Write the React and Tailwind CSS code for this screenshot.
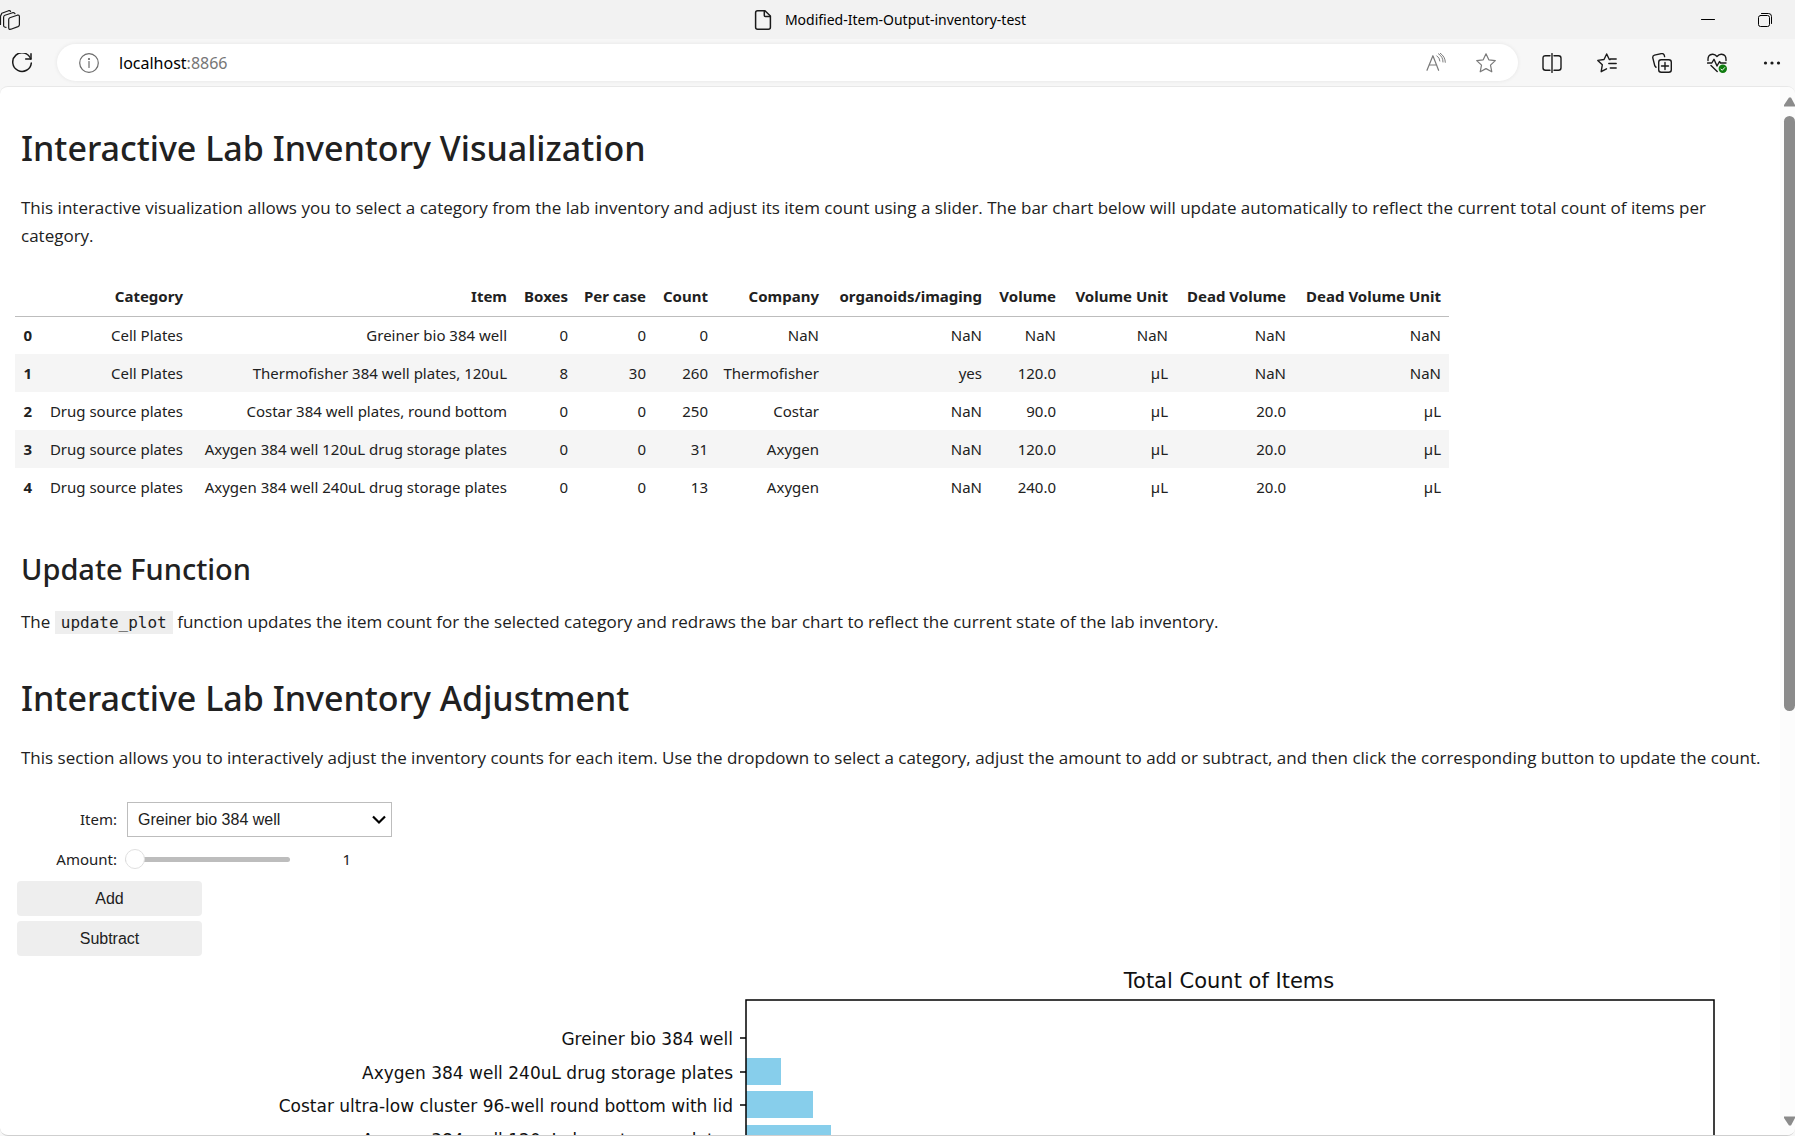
import React, { useState } from "react";

const columns = [
  { label: "Category", width: "w-[151px]" },
  { label: "Item", width: "w-[324px]" },
  { label: "Boxes", width: "w-[61px]" },
  { label: "Per case", width: "w-[78px]" },
  { label: "Count", width: "w-[62px]" },
  { label: "Company", width: "w-[111px]" },
  { label: "organoids/imaging", width: "w-[163px]" },
  { label: "Volume", width: "w-[74px]" },
  { label: "Volume Unit", width: "w-[112px]" },
  { label: "Dead Volume", width: "w-[118px]" },
  { label: "Dead Volume Unit", width: "w-[155px]" },
];

const rows = [
  ["Cell Plates", "Greiner bio 384 well", "0", "0", "0", "NaN", "NaN", "NaN", "NaN", "NaN", "NaN"],
  ["Cell Plates", "Thermofisher 384 well plates, 120uL", "8", "30", "260", "Thermofisher", "yes", "120.0", "µL", "NaN", "NaN"],
  ["Drug source plates", "Costar 384 well plates, round bottom", "0", "0", "250", "Costar", "NaN", "90.0", "µL", "20.0", "µL"],
  ["Drug source plates", "Axygen 384 well 120uL drug storage plates", "0", "0", "31", "Axygen", "NaN", "120.0", "µL", "20.0", "µL"],
  ["Drug source plates", "Axygen 384 well 240uL drug storage plates", "0", "0", "13", "Axygen", "NaN", "240.0", "µL", "20.0", "µL"],
];

const bars = [
  { label: "Greiner bio 384 well", size: 0 },
  { label: "Axygen 384 well 240uL drug storage plates", size: 35 },
  { label: "Costar ultra-low cluster 96-well round bottom with lid", size: 67 },
  { label: "Axygen 384 well 120uL drug storage plates", size: 85 },
];

function Icon({ size = 20, className = "", children }) {
  return (
    <svg
      width={size}
      height={size}
      viewBox={`0 0 ${size} ${size}`}
      fill="none"
      stroke="currentColor"
      strokeWidth="1.2"
      strokeLinecap="round"
      strokeLinejoin="round"
      className={`shrink-0 ${className}`}
      aria-hidden="true"
    >
      {children}
    </svg>
  );
}

function IconButton({ label, className = "", children }) {
  return (
    <button type="button" aria-label={label} className={`flex h-8 items-center justify-center ${className}`}>
      {children}
    </button>
  );
}

function TitleBar() {
  return (
    <header className="grid h-[39px] shrink-0 grid-cols-[1fr_auto_1fr] items-center bg-[#f2f2f2] text-[#1a1a1a]">
      <IconButton label="Tab actions" className="w-5">
        <Icon>
          <path d="M0.5 14.5V6.2L1.8 3.2 8.6 0.7q1.4-.4 2 .8" />
          <path d="M6 17.3 4.6 17q-1-.4-1-1.500V7.200q0-1.500 1.300-2L12.600 2.700q1.800-.5 2.400 1" />
          <path d="M9.800 7.700 17.200 5.200q2.200-.5 2.200 1.300v8.200q0 1.300-1.400 1.900l-7.100 2.600q-2.200.6-2.200-1.400V9.400q0-1.200 1.100-1.700z" />
        </Icon>
      </IconButton>
      <div className="flex items-center gap-3 pr-4">
        <Icon>
          <path d="M4.600 .8h7.400L17.400 6v11.200q0 2-2 2H4.600q-2 0-2-2V2.800q0-2 2-2z" strokeWidth="1.500" />
          <path d="M11.300 1v4.500q0 1 1 1h4.700" strokeWidth="1.500" />
        </Icon>
        <span className="text-sm text-black">Modified-Item-Output-inventory-test</span>
      </div>
      <div className="flex items-center justify-end gap-[17px] pr-[10px] text-black">
        <IconButton label="Minimize" className="w-10">
          <Icon size={14}>
            <path d="M.5 6.500h13" strokeWidth="1" />
          </Icon>
        </IconButton>
        <IconButton label="Restore" className="w-10">
          <Icon size={14}>
            <rect x=".5" y="2.500" width="11" height="11" rx="2" strokeWidth="1" />
            <path d="M3.500.5h7q3 0 3 3v7" strokeWidth="1" />
          </Icon>
        </IconButton>
      </div>
    </header>
  );
}

function Toolbar() {
  return (
    <nav className="flex h-[47px] shrink-0 items-center bg-[#f7f7f7] pl-[6px] pr-[3px] text-[#1a1a1a]">
      <IconButton label="Refresh" className="w-8">
        <Icon>
          <path d="M18.800 6A9.300 9.300 0 1 0 19.300 10" strokeWidth="1.500" />
          <path d="M19 .8v5.300h-5.300" strokeWidth="1.500" />
        </Icon>
      </IconButton>
      <div className="ml-[19px] flex h-[37px] flex-1 items-center rounded-full bg-white pl-[22px] pr-4 shadow-[0_0_4px_rgba(0,0,0,0.08)]">
        <Icon className="text-[#6b6b6b]">
          <circle cx="10" cy="10" r="9.300" />
          <path d="M10 8.500v6" />
          <circle cx="10" cy="6" r=".5" fill="currentColor" />
        </Icon>
        <p className="ml-5 flex-1 text-base text-black">
          localhost<span className="text-[#767676]">:8866</span>
        </p>
        <div className="flex gap-[18px] text-[#7a7a7a]">
          <IconButton label="Read aloud" className="w-8">
            <Icon>
              <path d="M1 17.300 6.900 2.700 12.600 17.300M3 12h7.800" />
              <path d="M10.800 2.800q3 2 3.100 5.200M12.500.8q4.700 3 4.500 8.200M14.300.3q5 3.400 5 9" strokeWidth="1" />
            </Icon>
          </IconButton>
          <IconButton label="Add to favorites" className="w-8">
            <Icon>
              <path d="M10 .8 12.800 6.800 19.300 7.600 14.500 12.100 15.800 18.800 10 15.600 4.200 18.800 5.500 12.100.7 7.600 7.200 6.800z" />
            </Icon>
          </IconButton>
        </div>
      </div>
      <div className="ml-[14px] flex gap-[15px]">
        <IconButton label="Split screen" className="w-10">
          <Icon>
            <path d="M8 2.700H3.500q-2.500 0-2.500 2.500v9.600q0 2.500 2.500 2.500H8M12 2.700h4.500q2.500 0 2.500 2.500v9.600q0 2.500-2.500 2.500H12M10 .6v18.800" strokeWidth="1.400" />
          </Icon>
        </IconButton>
        <IconButton label="Favorites" className="w-10">
          <Icon>
            <path d="M13 6.600 12.300 6.500 9.700 1 7 6.500 .8 7.400 5.300 11.800 4.200 18.700 9.500 15.800M13.300 6h5.900M11.800 10.500h7.400M13.300 15h5.900" strokeWidth="1.400" />
          </Icon>
        </IconButton>
        <IconButton label="Collections" className="w-10">
          <Icon>
            <rect x="6.700" y="6.700" width="12.600" height="12.600" rx="2.500" strokeWidth="1.400" />
            <path d="M13 9.500v7M9.500 13h7M4 14.300 2.800 12.800.8 4.800Q.5 2.700 2.500 2.100L9.500.6q2-.3 2.700 1.500l.4 1.500" strokeWidth="1.400" />
          </Icon>
        </IconButton>
        <IconButton label="Browser essentials" className="w-10">
          <Icon>
            <path d="M1 7.500Q.6 1.500 5.500 1.200 8 1 10 3.500 12 1 14.500 1.200 19.400 1.500 19 7.500M.6 10h4.200L7 6.300 10 13l2.500-4.500L13.500 10H19M4 12.500 10.200 18.500" strokeWidth="1.400" />
            <circle cx="15.800" cy="15.800" r="4.200" fill="#107c10" stroke="none" />
            <path d="M13.900 16l1.300 1.300 2.500-2.700" stroke="white" strokeWidth="1" />
          </Icon>
        </IconButton>
        <IconButton label="Settings and more" className="w-10">
          <Icon>
            <g fill="currentColor" stroke="none">
              <circle cx="3.500" cy="10" r="1.600" />
              <circle cx="10" cy="10" r="1.600" />
              <circle cx="16.500" cy="10" r="1.600" />
            </g>
          </Icon>
        </IconButton>
      </div>
    </nav>
  );
}

function InventoryTable() {
  return (
    <table className="mt-[27px] table-fixed border-collapse text-right text-[15px] leading-5">
      <colgroup>
        <col className="w-[25px]" />
        {columns.map((c) => (
          <col key={c.label} className={c.width} />
        ))}
      </colgroup>
      <thead>
        <tr className="h-[39px] border-b border-[#bdbdbd]">
          <td />
          {columns.map((c) => (
            <th key={c.label} scope="col" className="whitespace-nowrap pr-2 font-bold">
              {c.label}
            </th>
          ))}
        </tr>
      </thead>
      <tbody>
        {rows.map((row, i) => (
          <tr key={i} className="h-[38px] even:bg-[#f5f5f5]">
            <th scope="row" className="pr-2 font-bold">
              {i}
            </th>
            {row.map((cell, j) => (
              <td key={j} className="whitespace-nowrap pr-2">
                {cell}
              </td>
            ))}
          </tr>
        ))}
      </tbody>
    </table>
  );
}

function Controls() {
  const [amount, setAmount] = useState(1);
  return (
    <form className="mt-[30px] flex flex-col items-start gap-[5px] pl-[2px]" onSubmit={(e) => e.preventDefault()}>
      <div className="flex h-[35px] items-center">
        <label htmlFor="item" className="w-[100px] text-right text-[15px]">
          Item:
        </label>
        <div className="relative ml-[10px]">
          <select
            id="item"
            className="h-[35px] w-[265px] appearance-none border border-[#bdbdbd] bg-white pl-[10px] font-['Liberation_Sans',sans-serif] text-base"
          >
            {rows.map((r) => (
              <option key={r[1]}>{r[1]}</option>
            ))}
          </select>
          <svg
            className="pointer-events-none absolute right-[6px] top-[13px]"
            width="14"
            height="10"
            viewBox="0 0 14 10"
            fill="none"
            stroke="black"
            strokeWidth="2.200"
            aria-hidden="true"
          >
            <path d="M1 1.500 7 7.500 13 1.500" />
          </svg>
        </div>
      </div>
      <div className="flex h-[34px] items-center">
        <label htmlFor="amount" className="w-[100px] text-right text-[15px]">
          Amount:
        </label>
        <input
          id="amount"
          type="range"
          min="1"
          max="100"
          value={amount}
          onChange={(e) => setAmount(Number(e.target.value))}
          className="ml-2 h-5 w-[165px] appearance-none bg-transparent [&::-webkit-slider-runnable-track]:h-[5px] [&::-webkit-slider-runnable-track]:rounded-full [&::-webkit-slider-runnable-track]:bg-[#bdbdbd] [&::-webkit-slider-thumb]:-mt-2 [&::-webkit-slider-thumb]:size-5 [&::-webkit-slider-thumb]:appearance-none [&::-webkit-slider-thumb]:rounded-full [&::-webkit-slider-thumb]:border [&::-webkit-slider-thumb]:border-[#e0e0e0] [&::-webkit-slider-thumb]:bg-white"
        />
        <output htmlFor="amount" className="w-[61px] text-right text-[15px]">
          {amount}
        </output>
      </div>
      {["Add", "Subtract"].map((name) => (
        <button
          key={name}
          type="button"
          className="h-[35px] w-[185px] rounded-sm bg-[#eeeeee] font-['Liberation_Sans',sans-serif] text-base"
        >
          {name}
        </button>
      ))}
    </form>
  );
}

function Chart() {
  return (
    <svg
      width="1500"
      height="600"
      viewBox="0 0 1500 600"
      role="img"
      aria-label="Total Count of Items"
      className="ml-[225px] shrink-0 font-['DejaVu_Sans',sans-serif]"
    >
      <text x="989" y="32" textAnchor="middle" fontSize="21" fill="#111">
        Total Count of Items
      </text>
      {bars.map((b, i) => {
        const center = 82 + Math.round(i * 33.6);
        return (
          <g key={b.label}>
            <rect x="506" y={center - 14} width={b.size} height="27" fill="#87ceeb" />
            <path d={`M500 ${center}h6`} stroke="black" strokeWidth="1.500" />
            <text x="493" y={center + 7} textAnchor="end" fontSize="17" fill="#111">
              {b.label}
            </text>
          </g>
        );
      })}
      <rect x="506" y="44" width="968" height="540" fill="none" stroke="black" strokeWidth="1.500" />
    </svg>
  );
}

function Scrollbar() {
  return (
    <div className="flex w-[15px] shrink-0 flex-col items-end bg-[#fcfcfc] pb-[9px] pt-[10px]" aria-hidden="true">
      <svg width="11" height="10" viewBox="0 0 11 10" fill="#8b8b8b">
        <path d="M5 .5h2L11 8v1.500H0V8z" />
      </svg>
      <div className="flex w-full flex-1 flex-col items-end py-[9px]">
        <div className="h-[60%] w-[11px] rounded-full bg-[#8b8b8b]" />
      </div>
      <svg width="11" height="10" viewBox="0 0 11 10" fill="#8b8b8b">
        <path d="M0 .5h11V2L7 9.500H5L0 2z" />
      </svg>
    </div>
  );
}

const h1 = "pl-[6px] text-[34px] font-medium leading-10";
const para = "pl-[6px] font-['Open_Sans',sans-serif] text-[17px] leading-7";

export default function App() {
  return (
    <div className="flex h-screen flex-col overflow-hidden bg-[#f7f7f7] font-['Noto_Sans',sans-serif] text-[#212121]">
      <TitleBar />
      <Toolbar />
      <div className="flex min-h-0 flex-1 overflow-hidden rounded-lg border-b border-t border-b-[#cfcfcf] border-t-[#e8e8e8] bg-white">
        <main className="min-w-0 flex-1 overflow-hidden pl-[15px] pt-[41px]">
          <h1 className={h1}>Interactive Lab Inventory Visualization</h1>
          <p className={`mt-[26px] pr-4 ${para}`}>
            This interactive visualization allows you to select a category from the lab inventory and adjust its item
            count using a slider. The bar chart below will update automatically to reflect the current total count of
            items per category.
          </p>
          <InventoryTable />
          <h2 className="mt-[46px] pl-[6px] text-[29px] font-medium leading-[34px]">Update Function</h2>
          <p className={`mt-[22px] ${para}`}>
            The{" "}
            <code className="bg-[#eeeeee] px-[6px] py-[2px] font-['DejaVu_Sans_Mono',monospace] text-base">
              update_plot
            </code>{" "}
            function updates the item count for the selected category and redraws the bar chart to reflect the current
            state of the lab inventory.
          </p>
          <h1 className={`mt-[42px] ${h1}`}>Interactive Lab Inventory Adjustment</h1>
          <p className={`mt-[26px] ${para}`}>
            This section allows you to interactively adjust the inventory counts for each item. Use the dropdown to
            select a category, adjust the amount to add or subtract, and then click the corresponding button to update
            the count.
          </p>
          <Controls />
          <Chart />
        </main>
        <Scrollbar />
      </div>
    </div>
  );
}
